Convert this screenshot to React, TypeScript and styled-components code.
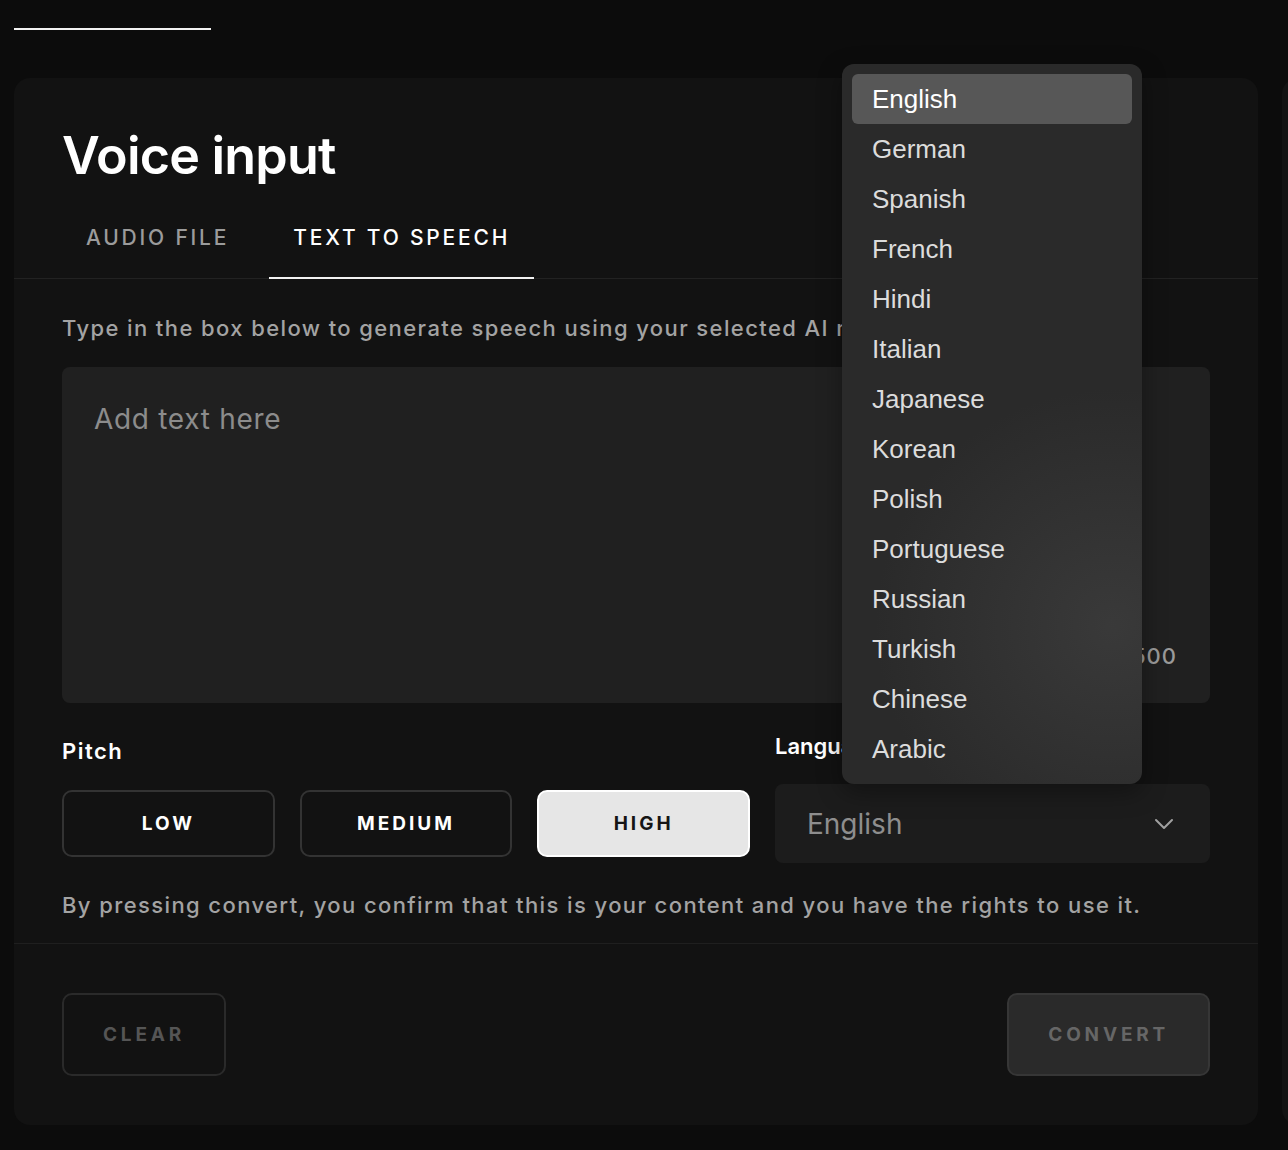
import React, { useState } from 'react'
import styled, { createGlobalStyle } from 'styled-components'

const GlobalStyle = createGlobalStyle`
    html, body {
        margin: 0;
        padding: 0;
        background: #0c0c0c;
    }
    body {
        font-family: 'Inter', 'Liberation Sans', sans-serif;
        color: #fff;
        overflow: hidden;
    }
    * {
        box-sizing: border-box;
    }
`

const Page = styled.div`
    width: 1288px;
    height: 1150px;
    padding: 28px 0 0 14px;
    overflow: hidden;
`

const TopTab = styled.div`
    width: 197px;
    height: 2px;
    background: #f2f2f2;
`

const Row = styled.div`
    display: flex;
    gap: 24px;
    margin-top: 48px;
`

const Card = styled.section`
    flex: 0 0 1244px;
    height: 1047px;
    background: #121212;
    border-radius: 16px;
    display: flex;
    flex-direction: column;
`

const SideCard = styled.div`
    flex: 0 0 300px;
    height: 1047px;
    background: #131313;
    border-radius: 16px;
`

const Header = styled.div`
    padding: 44px 48px 0;
    border-bottom: 1px solid #222;
`

const Title = styled.h1`
    margin: 0;
    font-family: 'Inter', sans-serif;
    font-weight: 600;
    font-size: 52px;
    line-height: 68px;
    letter-spacing: -0.8px;
    color: #fff;
`

const Tabs = styled.div`
    display: flex;
    gap: 16px;
    margin-top: 28px;
`

const Tab = styled.button<{ $active?: boolean }>`
    background: none;
    border: none;
    padding: 6px 24px 25px;
    margin-bottom: -1px;
    font-family: 'Inter', sans-serif;
    font-size: 21px;
    line-height: 28px;
    font-weight: 500;
    letter-spacing: 2.8px;
    color: ${p => (p.$active ? '#ffffff' : '#9b9b9b')};
    border-bottom: 2px solid ${p => (p.$active ? '#f2f2f2' : 'transparent')};
    cursor: pointer;
`

const Body = styled.div`
    padding: 33px 48px 0;
    border-bottom: 1px solid #1f1f1f;
`

const Hint = styled.p`
    margin: 0;
    font-size: 22px;
    font-weight: 500;
    line-height: 32px;
    letter-spacing: 1.4px;
    color: #a3a3a3;
    white-space: nowrap;
`

const TextBox = styled.div`
    position: relative;
    margin-top: 23px;
    height: 336px;
    background: #202020;
    border-radius: 8px;
`

const TextArea = styled.textarea`
    width: 100%;
    height: 100%;
    resize: none;
    border: none;
    outline: none;
    background: transparent;
    padding: 35px 32px;
    font-family: 'Inter', sans-serif;
    font-size: 28px;
    letter-spacing: 0.7px;
    color: #fff;
    &::placeholder {
        color: #8c8c8c;
    }
`

const Counter = styled.span`
    position: absolute;
    right: 33px;
    bottom: 34px;
    font-size: 22px;
    font-weight: 500;
    letter-spacing: 1px;
    color: #9a9a9a;
`

const Controls = styled.div`
    display: grid;
    grid-template-columns: 688px 1fr;
    column-gap: 25px;
    margin-top: 31px;
`

const Field = styled.div`
    position: relative;
    display: flex;
    flex-direction: column;
`

const Label = styled.div<{ $lift?: number; $tracking?: number }>`
    height: 34px;
    margin-top: ${p => -(p.$lift || 0)}px;
    font-size: 22px;
    font-weight: 600;
    line-height: 34px;
    letter-spacing: ${p => p.$tracking || 0}px;
    color: #fff;
`

const PitchRow = styled.div`
    display: grid;
    grid-template-columns: repeat(3, 1fr);
    gap: 25px;
    margin-top: 22px;
`

const PitchButton = styled.button<{ $active?: boolean }>`
    height: 67px;
    border-radius: 10px;
    border: 2px solid ${p => (p.$active ? '#ffffff' : '#333333')};
    background: ${p => (p.$active ? '#e6e6e6' : 'transparent')};
    color: ${p => (p.$active ? '#151515' : '#ffffff')};
    font-family: 'Inter', sans-serif;
    font-size: 19px;
    font-weight: 700;
    letter-spacing: 3px;
    cursor: pointer;
`

const Select = styled.div`
    margin-top: 21px;
    height: 79px;
    background: #1c1c1c;
    border-radius: 8px;
    display: flex;
    align-items: center;
    justify-content: space-between;
    padding: 0 36px 0 32px;
    font-size: 28px;
    color: #8e8e8e;
`

const Menu = styled.ul`
    position: absolute;
    left: 67px;
    top: -670px;
    width: 300px;
    margin: 0;
    padding: 10px;
    list-style: none;
    border-radius: 12px;
    background:
        radial-gradient(circle at 90% 78%, rgba(70, 70, 70, 0.55), rgba(70, 70, 70, 0) 38%),
        #2a2a2a;
    box-shadow: 0 8px 24px rgba(0, 0, 0, 0.35);
    z-index: 5;
`

const MenuItem = styled.li<{ $active?: boolean }>`
    height: 50px;
    padding: 0 20px;
    display: flex;
    align-items: center;
    border-radius: 6px;
    font-family: 'Liberation Sans', 'Inter', sans-serif;
    font-size: 26px;
    color: ${p => (p.$active ? '#ffffff' : '#dcdcdc')};
    background: ${p => (p.$active ? '#575757' : 'transparent')};
`

const Notice = styled.p`
    margin: 26px 0 0;
    padding-bottom: 22px;
    font-size: 22px;
    font-weight: 500;
    line-height: 32px;
    letter-spacing: 1.4px;
    color: #a3a3a3;
    white-space: nowrap;
`

const Footer = styled.div`
    display: flex;
    justify-content: space-between;
    padding: 49px 48px 0;
`

const ActionButton = styled.button<{ $filled?: boolean }>`
    height: 83px;
    padding: 0 39px;
    border-radius: 10px;
    border: 2px solid ${p => (p.$filled ? '#363636' : '#2a2a2a')};
    background: ${p => (p.$filled ? '#2a2a2a' : 'transparent')};
    color: ${p => (p.$filled ? '#666666' : '#555555')};
    font-family: 'Inter', sans-serif;
    font-size: 19px;
    font-weight: 700;
    letter-spacing: 3.8px;
`

const languages = [
    'English', 'German', 'Spanish', 'French', 'Hindi', 'Italian', 'Japanese',
    'Korean', 'Polish', 'Portuguese', 'Russian', 'Turkish', 'Chinese', 'Arabic',
]

const Chevron = () => (
    <svg width="20" height="12" viewBox="0 0 20 12" fill="none">
        <path d="M2 2l8 8 8-8" stroke="#a0a0a0" strokeWidth="2" strokeLinecap="round" strokeLinejoin="round" />
    </svg>
)

const App: React.FC = () => {
    const [pitch, setPitch] = useState('High')
    const [tab, setTab] = useState('tts')

    return (
        <Page>
            <GlobalStyle />
            <TopTab />
            <Row>
                <Card>
                    <Header>
                        <Title>Voice input</Title>
                        <Tabs>
                            <Tab $active={tab === 'file'} onClick={() => setTab('file')}>AUDIO FILE</Tab>
                            <Tab $active={tab === 'tts'} onClick={() => setTab('tts')}>TEXT TO SPEECH</Tab>
                        </Tabs>
                    </Header>
                    <Body>
                        <Hint>Type in the box below to generate speech using your selected AI model.</Hint>
                        <TextBox>
                            <TextArea placeholder="Add text here" />
                            <Counter>0 / 500</Counter>
                        </TextBox>
                        <Controls>
                            <Field>
                                <Label $tracking={1.5}>Pitch</Label>
                                <PitchRow>
                                    {['Low', 'Medium', 'High'].map(p => (
                                        <PitchButton key={p} $active={pitch === p} onClick={() => setPitch(p)}>
                                            {p.toUpperCase()}
                                        </PitchButton>
                                    ))}
                                </PitchRow>
                            </Field>
                            <Field>
                                <Label $lift={5}>Language</Label>
                                <Select>
                                    English
                                    <Chevron />
                                </Select>
                                <Menu>
                                    {languages.map(l => (
                                        <MenuItem key={l} $active={l === 'English'}>{l}</MenuItem>
                                    ))}
                                </Menu>
                            </Field>
                        </Controls>
                        <Notice>By pressing convert, you confirm that this is your content and you have the rights to use it.</Notice>
                    </Body>
                    <Footer>
                        <ActionButton>CLEAR</ActionButton>
                        <ActionButton $filled>CONVERT</ActionButton>
                    </Footer>
                </Card>
                <SideCard />
            </Row>
        </Page>
    )
}

export default App
